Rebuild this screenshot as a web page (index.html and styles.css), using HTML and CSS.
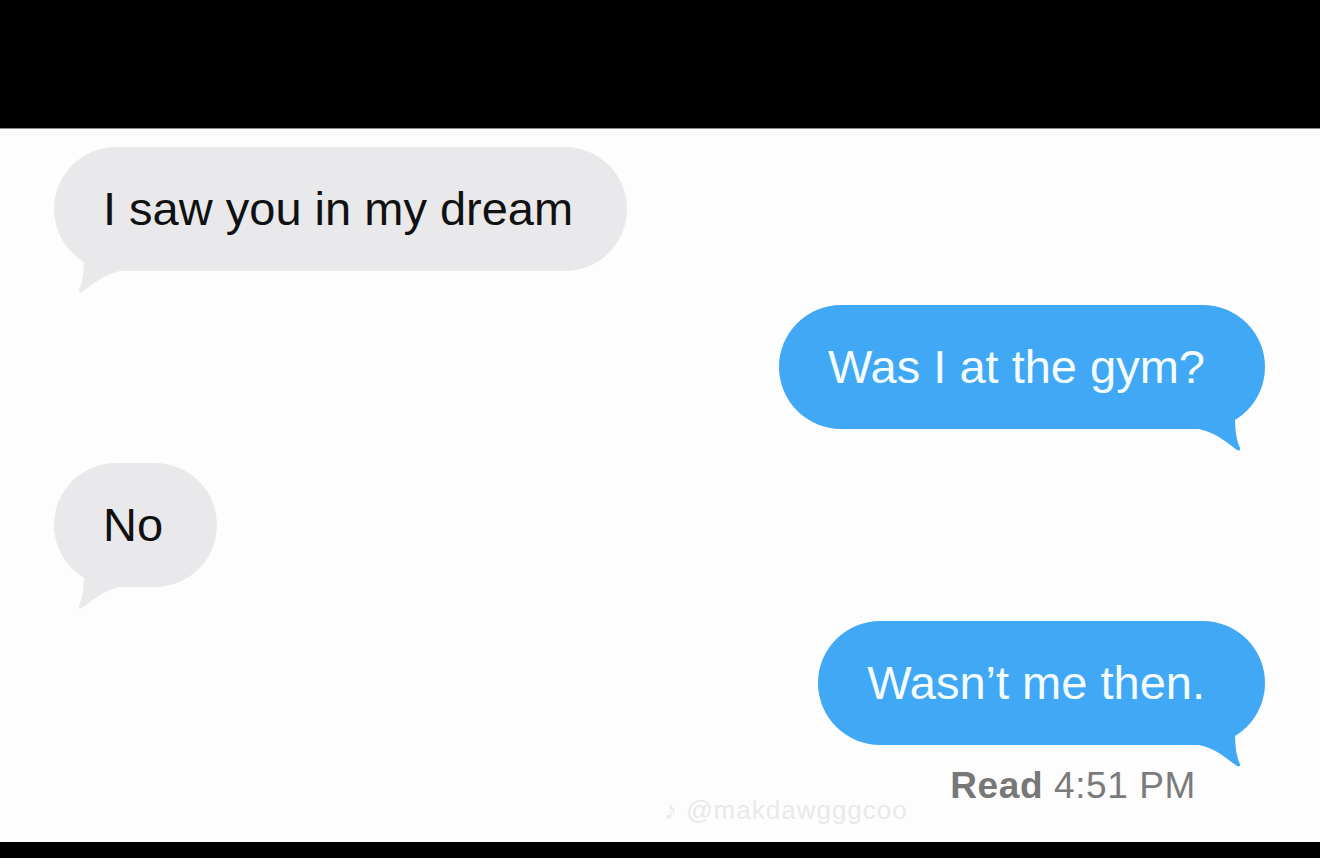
FILE: index.html
```html
<!DOCTYPE html>
<html lang="en">
<head>
<meta charset="utf-8">
<title>Messages</title>
<link rel="stylesheet" href="styles.css">
</head>
<body>
<div class="screen">
  <div class="topbar"></div>
  <main class="chat">
    <div class="msg them">
      <span class="text">I saw you in my dream</span>
      <svg class="tail" viewBox="0 0 80 46" width="80" height="46"><path d="M30 10 C30 24 29 34 25 43 C24 45 26 46 28 45 C38 38 48 28 66 24 L66 10 Z"/></svg>
    </div>
    <div class="msg me">
      <span class="text">Was I at the gym?</span>
      <svg class="tail" viewBox="0 0 80 46" width="80" height="46"><path d="M30 10 C30 24 29 34 25 43 C24 45 26 46 28 45 C38 38 48 28 66 24 L66 10 Z"/></svg>
    </div>
    <div class="msg them">
      <span class="text">No</span>
      <svg class="tail" viewBox="0 0 80 46" width="80" height="46"><path d="M30 10 C30 24 29 34 25 43 C24 45 26 46 28 45 C38 38 48 28 66 24 L66 10 Z"/></svg>
    </div>
    <div class="msg me">
      <span class="text">Wasn’t me then.</span>
      <svg class="tail" viewBox="0 0 80 46" width="80" height="46"><path d="M30 10 C30 24 29 34 25 43 C24 45 26 46 28 45 C38 38 48 28 66 24 L66 10 Z"/></svg>
    </div>
    <div class="receipt"><b>Read</b> 4:51 PM</div>
    <div class="watermark">♪ @makdawgggcoo</div>
  </main>
  <div class="bottombar"></div>
</div>
</body>
</html>
```
FILE: styles.css
```css
* { box-sizing: border-box; }
html, body { margin: 0; padding: 0; background: #000; }
body { font-family: "Liberation Sans", Arial, sans-serif; }

.screen {
  width: 1320px;
  height: 858px;
  display: flex;
  flex-direction: column;
  overflow: hidden;
}

.topbar {
  height: 129px;
  background: #000;
  border-bottom: 1px solid #8a8a8a;
  flex: none;
}

.bottombar {
  height: 16px;
  background: #000;
  flex: none;
}

.chat {
  flex: 1;
  position: relative;
  background: #fdfdfd;
  display: flex;
  flex-direction: column;
  padding: 18px 55px 0 54px;
}

.msg {
  position: relative;
  height: 124px;
  border-radius: 62px;
  display: flex;
  align-items: center;
  font-size: 47px;
  line-height: 56px;
  z-index: 0;
}

.msg + .msg { margin-top: 34px; }

.msg .text { position: relative; z-index: 1; }

.msg .tail {
  position: absolute;
  bottom: -22px;
  z-index: -1;
}

.them {
  align-self: flex-start;
  background: #e9e9eb;
  color: #111;
  padding: 0 54px 0 49px;
}

.them .tail { left: 0; fill: #e9e9eb; }

.me {
  align-self: flex-end;
  background: #40a8f4;
  color: #f4fcff;
  padding: 0 60px 0 49px;
}

.me .tail { right: 0; fill: #40a8f4; transform: scaleX(-1); }

.receipt {
  align-self: flex-end;
  margin-top: 21px;
  margin-right: 69px;
  font-size: 37px;
  line-height: 40px;
  color: #7b7b7b;
  letter-spacing: 0.6px;
}

.receipt b { font-weight: 700; color: #777; }

.watermark {
  position: absolute;
  left: 664px;
  top: 666px;
  font-size: 26px;
  color: #e9e9e9;
  letter-spacing: 1px;
}
```
